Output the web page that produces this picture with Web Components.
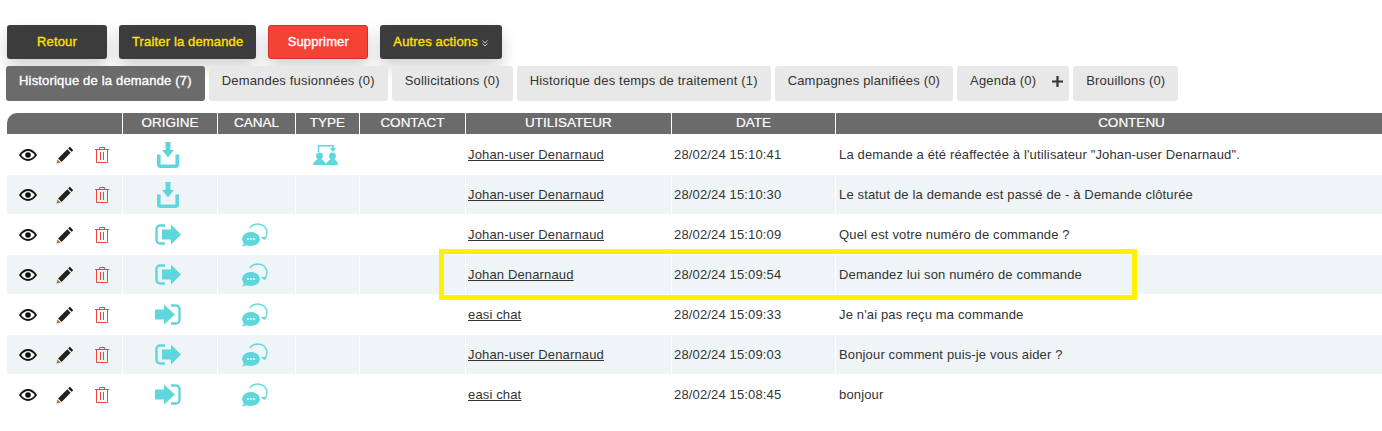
<!DOCTYPE html>
<html lang="fr">
<head>
<meta charset="utf-8">
<title>Historique de la demande</title>
<style>
  body {
    margin: 0;
    background: #fff;
    font-family: "Liberation Sans", Arial, sans-serif;
    color: #333;
  }
</style>
</head>
<body>
<request-page></request-page>

<script>
const ICONS = {
  eye: `<svg width="18" height="12" viewBox="0 0 18 12"><path d="M1 6C3.500 2.500 6 1 9 1s5.500 1.500 8 5c-2.500 3.500-5 5-8 5S3.500 9.500 1 6z" fill="none" stroke="#111" stroke-width="1.800"/><circle cx="9" cy="6" r="2.800" fill="#111"/></svg>`,
  pen: `<svg width="18" height="18" viewBox="0 0 18 18"><path d="M13.800 .8l3.400 3.400-1.600 1.600-3.400-3.400z" fill="#111"/><path d="M11.300 3.300l3.400 3.400-9.200 9.200-3.400-3.400z" fill="#222"/><path d="M1.300 13.300l3.400 3.400-4.200 .9z" fill="#a97c35"/></svg>`,
  trash: `<svg width="14" height="16" viewBox="0 0 14 16" fill="none" stroke="#f44336" stroke-width="1"><path d="M0 2.500h14M4.500 2.500v-2h5v2M1.500 2.500v13h11v-13M5.500 5v8M8.500 5v8"/></svg>`,
  download: `<svg width="22" height="26" viewBox="0 0 22 26"><path d="M8.500 0h5v8H17l-6 7.500L5 8h3.500z" fill="#5fd6dc"/><path d="M1.800 12.500v10a1.700 1.700 0 0 0 1.700 1.700h15a1.700 1.700 0 0 0 1.700-1.700v-10" fill="none" stroke="#5fd6dc" stroke-width="3.600"/></svg>`,
  transfer: `<svg width="27" height="20" viewBox="0 0 27 20"><path d="M6.500 7V.8h14.500V3" fill="none" stroke="#5fd6dc" stroke-width="1.500"/><path d="M18 3h6l-3 4z" fill="#5fd6dc"/><circle cx="7.500" cy="11" r="3.400" fill="#5fd6dc"/><circle cx="20.500" cy="11" r="3.400" fill="#5fd6dc"/><path d="M1 20c0-3 3-4.500 4.800-6h3.400c1.800 1.500 4.800 3 4.800 6zM14 20c0-3 3-4.500 4.800-6h3.400c1.800 1.500 3.800 3 3.800 6z" fill="#5fd6dc"/></svg>`,
  out: `<svg width="26" height="21" viewBox="0 0 26 21"><path d="M10 1.500H5A3.500 3.500 0 0 0 1.500 5v11A3.500 3.500 0 0 0 5 19.500h5" fill="none" stroke="#5fd6dc" stroke-width="2.400"/><path d="M7 5.500h9V.5l10 10-10 10v-5H7z" fill="#5fd6dc"/></svg>`,
  in: `<svg width="26" height="21" viewBox="0 0 26 21"><path d="M16 1.500h5A3.500 3.500 0 0 1 24.500 5v11a3.500 3.500 0 0 1-3.500 3.500h-5" fill="none" stroke="#5fd6dc" stroke-width="2.400"/><path d="M0 5.500h9V.5l11 10-11 10v-5H0z" fill="#5fd6dc"/></svg>`,
  chat: `<svg width="27" height="24" viewBox="0 0 27 24"><path d="M9 5C11 2 14 1 17 1c5 0 9 4 9 8 0 2-.5 4-1.500 5" fill="none" stroke="#5fd6dc" stroke-width="1.300"/><path d="M19.500 14H26l-2.500 3z" fill="#5fd6dc"/><ellipse cx="10" cy="16" rx="9" ry="7" fill="#5fd6dc"/><path d="M3 20l-2 3.500 6-1.500z" fill="#5fd6dc"/><circle cx="7" cy="16" r="1" fill="#fff"/><circle cx="10" cy="16" r="1" fill="#fff"/><circle cx="13" cy="16" r="1" fill="#fff"/></svg>`
};

class AppIcon extends HTMLElement {
  connectedCallback() {
    this.attachShadow({ mode: "open" });
    this.shadowRoot.innerHTML = `
      <style>
        :host { display: inline-flex; line-height: 0; }
      </style>
      ${ICONS[this.getAttribute("name")] || ""}
    `;
  }
}

class ActionButton extends HTMLElement {
  connectedCallback() {
    this.attachShadow({ mode: "open" });
    this.shadowRoot.innerHTML = `
      <style>
        :host {
          display: flex;
          align-items: center;
          justify-content: center;
          box-sizing: border-box;
          height: 34px;
          min-width: 100px;
          padding: 0 13px 2px;
          background: #3c3c3c;
          border-radius: 3px;
          color: #ffe100;
          font-size: 13px;
          letter-spacing: 0.15px;
          -webkit-text-stroke: 0.35px currentColor;
          box-shadow: 0 8px 16px rgba(0, 0, 0, 0.18);
        }
        :host([danger]) {
          background: #f44336;
          border: 1px solid #d32f2f;
          color: #fff;
        }
        svg { margin: 5px 1px 0 4px; }
      </style>
      <slot></slot>${this.hasAttribute("caret") ? '<svg width="6" height="7" viewBox="0 0 6 7" fill="none" stroke="#ccc" stroke-width="1"><path d="M.5 .5l2.500 2.500 2.500-2.500M.5 3.500l2.500 2.500 2.500-2.500"/></svg>' : ""}
    `;
  }
}

class TabItem extends HTMLElement {
  connectedCallback() {
    this.attachShadow({ mode: "open" });
    this.shadowRoot.innerHTML = `
      <style>
        :host {
          display: flex;
          align-items: center;
          box-sizing: border-box;
          height: 35px;
          padding: 0 13px 6px;
          background: #e8e8e8;
          border-radius: 3px;
          color: #333;
          font-size: 13px;
          letter-spacing: 0.18px;
        }
        :host([active]) {
          background: #6b6b6b;
          color: #fff;
          letter-spacing: 0.18px;
          -webkit-text-stroke: 0.35px currentColor;
        }
      </style>
      <slot></slot>
    `;
  }
}

class HistoryTable extends HTMLElement {
  connectedCallback() {
    const rows = [
      ["download", "", "transfer", "Johan-user Denarnaud", "28/02/24 15:10:41", 'La demande a été réaffectée à l\'utilisateur "Johan-user Denarnaud".'],
      ["download", "", "", "Johan-user Denarnaud", "28/02/24 15:10:30", "Le statut de la demande est passé de - à Demande clôturée"],
      ["out", "chat", "", "Johan-user Denarnaud", "28/02/24 15:10:09", "Quel est votre numéro de commande ?"],
      ["out", "chat", "", "Johan Denarnaud", "28/02/24 15:09:54", "Demandez lui son numéro de commande"],
      ["in", "chat", "", "easi chat", "28/02/24 15:09:33", "Je n'ai pas reçu ma commande"],
      ["out", "chat", "", "Johan-user Denarnaud", "28/02/24 15:09:03", "Bonjour comment puis-je vous aider ?"],
      ["in", "chat", "", "easi chat", "28/02/24 15:08:45", "bonjour"]
    ];
    const icon = (name) => (name ? `<app-icon name="${name}"></app-icon>` : "");
    const body = rows.map((r) => `
      <tr>
        <td class="tools">
          <div><app-icon name="eye"></app-icon><app-icon name="pen"></app-icon><app-icon name="trash"></app-icon></div>
        </td>
        <td class="ic">${icon(r[0])}</td>
        <td class="ic">${icon(r[1])}</td>
        <td class="ic">${icon(r[2])}</td>
        <td></td>
        <td><a href="#">${r[3]}</a></td>
        <td>${r[4]}</td>
        <td class="msg">${r[5]}</td>
      </tr>`).join("");

    this.attachShadow({ mode: "open" });
    this.shadowRoot.innerHTML = `
      <style>
        :host { display: block; font-size: 13px; letter-spacing: 0.15px; color: #333; }
        /* the table runs past the window on the right, CONTENU is centred on its full width */
        table { width: 1420px; table-layout: fixed; border-collapse: separate; border-spacing: 0; }
        th {
          height: 21px;
          padding: 0 0 2px;
          box-sizing: border-box;
          background: #6b6b6b;
          color: #fff;
          font-size: 13.5px;
          font-weight: 400;
          -webkit-text-stroke: 0.2px currentColor;
          border-left: 1px solid #fff;
          letter-spacing: 0;
        }
        th:first-child { border-left: 0; border-top-left-radius: 10px; }
        tbody tr:first-child td { border-top: 1px solid #fff; }
        td {
          height: 39px;
          padding: 0 0 0 2px;
          border-left: 1px solid #fff;
          border-bottom: 1px solid #fff;
          overflow: hidden;
          white-space: nowrap;
        }
        td:first-child { border-left: 0; }
        td.msg { padding-left: 3px; }
        tbody tr:nth-child(even) td { background: #eff4f7; }
        td.ic { padding: 0 4px 0 0; text-align: center; }
        td.ic app-icon { vertical-align: middle; }
        td.tools { padding: 0; }
        .tools div {
          display: grid;
          grid-template-columns: 18px 18px 16px;
          column-gap: 19px;
          align-items: center;
          justify-items: center;
          padding-left: 12px;
        }
        .tools app-icon:last-child { justify-self: end; }
        a { color: #333; text-decoration: underline; }
      </style>
      <table>
        <colgroup>
          <col style="width:115px"><col style="width:95px"><col style="width:78px"><col style="width:64px">
          <col style="width:106px"><col style="width:206px"><col style="width:164px"><col>
        </colgroup>
        <thead>
          <tr><th></th><th>ORIGINE</th><th>CANAL</th><th>TYPE</th><th>CONTACT</th><th>UTILISATEUR</th><th>DATE</th><th>CONTENU</th></tr>
        </thead>
        <tbody>${body}</tbody>
      </table>
    `;
  }
}

class RequestPage extends HTMLElement {
  connectedCallback() {
    this.attachShadow({ mode: "open" });
    this.shadowRoot.innerHTML = `
      <style>
        :host { display: block; position: relative; height: 431px; overflow: hidden; padding-top: 25px; box-sizing: border-box; }
        .actions { display: flex; gap: 12px; padding-left: 7px; }
        .tabs { display: flex; gap: 4px; margin-top: 7px; padding-left: 6px; }
        .agenda { padding-right: 33px; }
        .plus {
          position: absolute;
          left: 1052px;
          top: 76px;
          line-height: 0;
        }
        history-table { margin: 12px 0 0 7px; }
        /* highlight drawn over the row */
        .highlight {
          position: absolute;
          left: 439px;
          top: 249px;
          width: 698px;
          height: 51px;
          box-sizing: border-box;
          border: 5px solid #fff200;
        }
      </style>
      <div class="actions">
        <action-button>Retour</action-button>
        <action-button>Traiter la demande</action-button>
        <action-button danger>Supprimer</action-button>
        <action-button caret>Autres actions</action-button>
      </div>
      <div class="tabs">
        <tab-item active>Historique de la demande (7)</tab-item>
        <tab-item>Demandes fusionnées (0)</tab-item>
        <tab-item>Sollicitations (0)</tab-item>
        <tab-item>Historique des temps de traitement (1)</tab-item>
        <tab-item>Campagnes planifiées (0)</tab-item>
        <tab-item class="agenda">Agenda (0)</tab-item>
        <tab-item>Brouillons (0)</tab-item>
      </div>
      <div class="plus"><svg width="11" height="11" viewBox="0 0 11 11"><path d="M5.500 0v11M0 5.500h11" stroke="#333" stroke-width="2.200"/></svg></div>
      <history-table></history-table>
      <div class="highlight"></div>
    `;
  }
}

customElements.define("app-icon", AppIcon);
customElements.define("action-button", ActionButton);
customElements.define("tab-item", TabItem);
customElements.define("history-table", HistoryTable);
customElements.define("request-page", RequestPage);
</script>
</body>
</html>
